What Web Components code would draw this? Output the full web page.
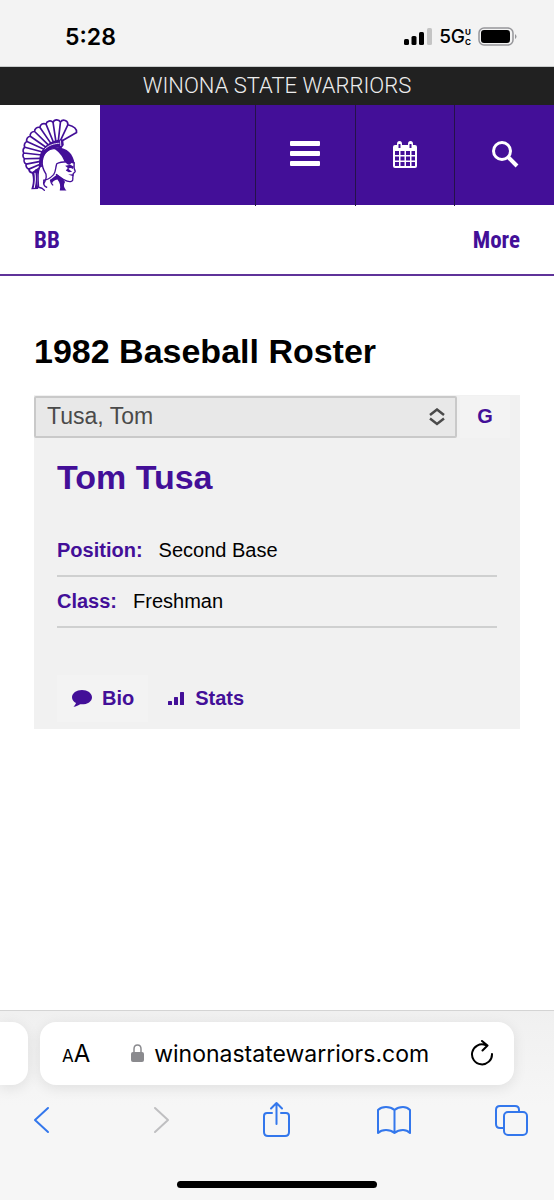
<!DOCTYPE html>
<html lang="en">
<head>
<meta charset="utf-8">
<meta name="viewport" content="width=device-width, initial-scale=1">
<title>1982 Baseball Roster - Winona State Warriors</title>
<style>
   html {
      --purple: #430f98;
      --grey: #f1f1f1;
      --blue: #3377ec;
   }
   body {
      margin: 0;
      min-height: 100vh;
      display: flex;
      flex-direction: column;
      background-color: #ffffff;
      color: #000000;
      font-family: "Liberation Sans", Arial, sans-serif;
   }
   roster-page {
      flex: 1;
   }
</style>
</head>
<body>
<status-bar time="5:28"></status-bar>
<site-header>Winona State Warriors</site-header>
<sport-nav>
   <span slot="sport">BB</span>
   <span slot="more">More</span>
</sport-nav>
<roster-page>
   <h1 slot="title">1982 Baseball Roster</h1>
   <player-card name="Tom Tusa" option="Tusa, Tom">
      <player-field label="Position:">Second Base</player-field>
      <player-field label="Class:">Freshman</player-field>
   </player-card>
</roster-page>
<browser-bar url="winonastatewarriors.com"></browser-bar>

<script>
class StatusBar extends HTMLElement {
   constructor() {
      super();
      this.attachShadow({ mode: 'open' })
      this.shadowRoot.innerHTML = `
         <style>
            :host {
               display: flex;
               justify-content: space-between;
               align-items: center;
               box-sizing: border-box;
               height: 67px;
               padding: 8px 37px 0 65px;
               background-color: #f3f3f3;
               border-bottom: 1px solid #c9cccc;
               font-family: Inter, sans-serif;
            }
            time {
               font-size: 23px;
               font-weight: 600;
            }
            .status {
               display: flex;
               align-items: center;
               gap: 7px;
            }
            .network {
               display: flex;
               align-items: center;
               font-size: 19px;
               font-weight: 500;
               line-height: 20px;
            }
            .network small {
               display: flex;
               flex-direction: column;
               font-size: 8px;
               font-weight: 700;
               line-height: 10px;
            }
            svg {
               display: block;
            }
         </style>
         <time></time>
         <div class="status">
            <svg width="28" height="18" viewBox="0 0 28 18" aria-label="Signal">
               <rect x="0" y="11" width="5" height="6" rx="1.5"/>
               <rect x="7.5" y="8" width="5" height="9" rx="1.5"/>
               <rect x="15" y="4" width="5" height="13" rx="1.5"/>
               <rect x="23" y="0" width="5" height="17" rx="1.5" fill="#c4c4c4"/>
            </svg>
            <div class="network"><span>5G</span><small><span>U</span><span>C</span></small></div>
            <svg width="39" height="20" viewBox="0 0 39 20" aria-label="Battery">
               <rect x="1" y="1" width="34" height="17" rx="5" fill="none" stroke="#96969a" stroke-width="1.5"/>
               <rect x="3" y="3" width="29" height="13" rx="3"/>
               <path d="M37 7q1.5 1 1.5 2.5t-1.5 2.5z" fill="#96969a"/>
            </svg>
         </div>
         `;
   }
   connectedCallback() {
      this.shadowRoot.querySelector('time').textContent = this.getAttribute('time')
   }
}
customElements.define('status-bar', StatusBar)

class WarriorLogo extends HTMLElement {
   constructor() {
      super();
      this.attachShadow({ mode: 'open' })
      this.shadowRoot.innerHTML = `
         <style>
            :host {
               display: block;
            }
            svg {
               display: block;
               width: 100%;
               height: 100%;
            }
         </style>
         <svg viewBox="0 15 297 300" fill="none" stroke="#430f98" stroke-width="5" stroke-linejoin="round" stroke-linecap="round" role="img" aria-label="Winona State Warriors">
            <path class="crest"/>
            <path fill="#430f98" stroke="none" d="M188 118C160 116 134 132 121 158C116 170 117 186 115 204L125 199C124 176 129 162 144 151C157 142 172 141 183 144L190 134Z"/>
            <path stroke="#ffffff" stroke-width="2.5" d="M134 146C146 134 160 130 176 129M180 122L181 136"/>
            <path fill="#430f98" stroke="none" d="M158 143C192 136 219 157 222 190L212 188C209 194 204 195 199 190L191 182C186 168 176 154 158 143Z"/>
            <path stroke-width="4" d="M163 145C145 143 129 158 126 181C124 197 130 210 137 221C139 232 135 242 130 249M199 184C186 184 176 186 169 190C165 202 166 215 160 222C151 231 146 237 131 239"/>
            <path stroke-width="4" d="M221 187C220 198 219 204 224 212C224 216 219 217 218 220C218 226 216 231 217 235C218 243 209 245 200 242C190 239 180 231 168 222"/>
            <path fill="#430f98" stroke="none" d="M194 196L210 193L220 199L217 206C212 202 207 202 204 205C206 209 211 210 215 214L205 215L196 210L202 203ZM203 222L219 221L218 227ZM148 239L170 222L187 235L194 244C188 253 190 260 198 270L178 270C181 257 179 246 171 237C163 238 158 242 155 248Z"/>
            <path stroke-width="4" d="M117 204C112 213 113 238 115 260L125 263L132 269M131 239C128 251 130 257 139 260M151 239C151 246 154 250 157 253"/>
            <path fill="#430f98" stroke="none" d="M94 215L102 212L107 206L115 206C110 225 111 247 114 265L93 266C98 251 101 235 94 215Z"/>
            <path stroke="#ffffff" stroke-width="3" d="M104 218C107 234 105 248 102 261"/>
         </svg>
         `;
   }
   connectedCallback() {
      // plume tips from front to back, each with its root on the helmet
      const tips = [[228, 97], [202, 74], [180, 66], [158, 67], [137, 72], [119, 82], [103, 94], [90, 108], [80, 124], [74, 141], [71, 158], [73, 175], [78, 191], [86, 206], [97, 217]]
      const roots = [[188, 120], [181, 119], [174, 119], [166, 120], [158, 123], [150, 127], [143, 133], [136, 140], [131, 147], [127, 155], [124, 164], [122, 174], [120, 183], [118, 192], [116, 203]]
      let d = `M${tips[0]}`
      tips.slice(1).forEach((tip, i) => {
         d += i === 0 ? `C230 84 214 77 ${tip}` : `A12 12 0 0 0 ${tip}`
      })
      tips.forEach((tip, i) => {
         d += `M${tip}L${roots[i]}`
      })
      this.shadowRoot.querySelector('.crest').setAttribute('d', d)
   }
}
customElements.define('warrior-logo', WarriorLogo)

class SiteHeader extends HTMLElement {
   constructor() {
      super();
      this.attachShadow({ mode: 'open' })
      this.shadowRoot.innerHTML = `
         <style>
            :host {
               display: block;
            }
            .school {
               background-color: #212121;
               color: #ededed;
               font-family: Roboto, sans-serif;
               font-size: 22px;
               font-weight: 300;
               line-height: 38px;
               text-align: center;
               text-transform: uppercase;
            }
            nav {
               display: grid;
               grid-template-columns: 18% 1fr 18% 18% 18%;
               height: 100px;
               background-color: var(--purple);
            }
            .home {
               background-color: #ffffff;
            }
            warrior-logo {
               height: 100%;
            }
            button {
               display: flex;
               justify-content: center;
               align-items: center;
               padding: 0 0 2px;
               border: 0;
               border-left: 1px solid #24124a;
               background: none;
               color: #ffffff;
            }
         </style>
         <div class="school"><slot></slot></div>
         <nav>
            <a class="home" href="#"><warrior-logo></warrior-logo></a>
            <span></span>
            <button aria-label="Menu">
               <svg width="30" height="26" viewBox="0 0 30 26" fill="currentColor">
                  <rect y="0" width="30" height="5" rx="1"/>
                  <rect y="10" width="30" height="5" rx="1"/>
                  <rect y="20" width="30" height="5" rx="1"/>
               </svg>
            </button>
            <button aria-label="Calendar">
               <svg width="24" height="27" viewBox="0 0 24 27">
                  <path fill="currentColor" fill-rule="evenodd" d="M2 4H4V3Q4 0 6.5 0T9 3V4H15V3Q15 0 17.5 0T20 3V4H22Q24 4 24 6V25Q24 27 22 27H2Q0 27 0 25V6Q0 4 2 4ZM5.500 3V7H7.500V3ZM16.500 3V7H18.500V3ZM2 10H6V14H2ZM7.500 10H11.500V14H7.500ZM13 10H17V14H13ZM18.500 10H22V14H18.500ZM2 15.500H6V19.500H2ZM7.500 15.500H11.500V19.500H7.500ZM13 15.500H17V19.500H13ZM18.500 15.500H22V19.500H18.500ZM2 21H6V25H2ZM7.500 21H11.500V25H7.500ZM13 21H17V25H13ZM18.500 21H22V25H18.500Z"/>
               </svg>
            </button>
            <button aria-label="Search">
               <svg width="28" height="28" viewBox="0 0 28 28" fill="none" stroke="currentColor">
                  <circle cx="11" cy="11" r="8.5" stroke-width="3"/>
                  <path d="M17 17L26 26" stroke-width="4"/>
               </svg>
            </button>
         </nav>
         `;
   }
}
customElements.define('site-header', SiteHeader)

class SportNav extends HTMLElement {
   constructor() {
      super();
      this.attachShadow({ mode: 'open' })
      this.shadowRoot.innerHTML = `
         <style>
            :host {
               display: flex;
               justify-content: space-between;
               align-items: center;
               box-sizing: border-box;
               height: 71px;
               padding: 2px 34px 0;
               border-bottom: 2px solid #5f3299;
               font-family: "Roboto Condensed", "Liberation Sans Narrow", Roboto, sans-serif;
            }
            a, button {
               padding: 0;
               border: 0;
               background: none;
               color: var(--purple);
               font: inherit;
               font-size: 23px;
               font-weight: 700;
               text-decoration: none;
            }
         </style>
         <a href="#"><slot name="sport"></slot></a>
         <button><slot name="more"></slot></button>
         `;
   }
}
customElements.define('sport-nav', SportNav)

class RosterPage extends HTMLElement {
   constructor() {
      super();
      this.attachShadow({ mode: 'open' })
      this.shadowRoot.innerHTML = `
         <style>
            :host {
               display: block;
               padding: 55px 34px 0;
            }
            ::slotted(h1) {
               margin: 0 0 24px;
               font-size: 34px;
               line-height: 40px;
            }
         </style>
         <main>
            <slot name="title"></slot>
            <slot></slot>
         </main>
         `;
   }
}
customElements.define('roster-page', RosterPage)

class PlayerField extends HTMLElement {
   constructor() {
      super();
      this.attachShadow({ mode: 'open' })
      this.shadowRoot.innerHTML = `
         <style>
            :host {
               display: flex;
               gap: 16px;
               border-bottom: 2px solid #cfd0d0;
               font-size: 20px;
               line-height: 49px;
            }
            b {
               color: var(--purple);
            }
         </style>
         <b></b>
         <span><slot></slot></span>
         `;
   }
   connectedCallback() {
      this.shadowRoot.querySelector('b').textContent = this.getAttribute('label')
   }
}
customElements.define('player-field', PlayerField)

class PlayerCard extends HTMLElement {
   constructor() {
      super();
      this.attachShadow({ mode: 'open' })
      this.shadowRoot.innerHTML = `
         <style>
            :host {
               display: block;
               background-color: var(--grey);
            }
            .picker {
               display: flex;
               align-items: center;
               gap: 3px;
               padding: 1px 10px 0 0;
            }
            /* the arrows share the grid cell of the select */
            .choice {
               flex: 1;
               display: grid;
               align-items: center;
            }
            .choice > * {
               grid-area: 1 / 1;
            }
            .choice svg {
               justify-self: end;
               margin-right: 12px;
               pointer-events: none;
            }
            select {
               appearance: none;
               height: 42px;
               padding: 0 11px 2px;
               border: 2px solid #c9c9c9;
               border-radius: 2px;
               background-color: #e8e8e8;
               color: #4a4a4a;
               font: inherit;
               font-size: 23px;
            }
            button, .tabs a {
               box-sizing: border-box;
               border: 0;
               background-color: #f3f3f3;
               color: var(--purple);
               font: inherit;
               font-size: 20px;
               font-weight: 700;
            }
            button {
               width: 50px;
               height: 42px;
               padding: 0 0 2px;
            }
            .body {
               padding: 18px 23px 7px;
            }
            h2 {
               margin: 0 0 28px;
               color: var(--purple);
               font-size: 34px;
               line-height: 42px;
            }
            .tabs {
               display: flex;
               gap: 6px;
               margin-top: 47px;
            }
            .tabs a {
               display: flex;
               align-items: center;
               gap: 10px;
               height: 47px;
               padding: 0 14px;
               text-decoration: none;
            }
            .tabs a + a {
               background: none;
            }
         </style>
         <div class="picker">
            <div class="choice">
               <select aria-label="Player"><option></option></select>
               <svg width="16" height="18" viewBox="0 0 16 18" fill="none" stroke="#4a4a4a" stroke-width="2.5">
                  <path d="M1 7L8 1.5L15 7M1 10.500L8 16L15 10.500"/>
               </svg>
            </div>
            <button>G</button>
         </div>
         <div class="body">
            <h2></h2>
            <slot></slot>
            <div class="tabs">
               <a href="#bio">
                  <svg width="21" height="17" viewBox="0 0 21 17" fill="currentColor">
                     <path d="M11 0C5.500 0 1 3.200 1 7.200C1 9.600 2.500 11.700 5 13C4.600 14.500 3.600 15.700 2.400 16.700C5.400 16.600 7.500 15.500 9.200 14.300C15.700 14.900 21 11.800 21 7.200C21 3.200 16.500 0 11 0Z"/>
                  </svg>
                  Bio
               </a>
               <a href="#stats">
                  <svg width="17" height="14" viewBox="0 0 17 14" fill="currentColor">
                     <rect x="0" y="9" width="4" height="4" rx="0.5"/>
                     <rect x="6" y="5" width="4" height="8" rx="0.5"/>
                     <rect x="12" y="0" width="4" height="13" rx="0.5"/>
                  </svg>
                  Stats
               </a>
            </div>
         </div>
         `;
   }
   connectedCallback() {
      this.shadowRoot.querySelector('h2').textContent = this.getAttribute('name')
      this.shadowRoot.querySelector('option').textContent = this.getAttribute('option')
   }
}
customElements.define('player-card', PlayerCard)

class BrowserBar extends HTMLElement {
   constructor() {
      super();
      this.attachShadow({ mode: 'open' })
      this.shadowRoot.innerHTML = `
         <style>
            :host {
               display: block;
               border-top: 1px solid #d4d4d4;
               padding: 11px 0 12px;
               background: linear-gradient(#f0f0f0, #f6f6f6 50%);
               font-family: Inter, sans-serif;
            }
            button {
               display: flex;
               justify-content: center;
               align-items: center;
               padding: 0;
               border: 0;
               background: none;
               color: inherit;
               font: inherit;
            }
            .tabs {
               display: flex;
               gap: 12px;
               padding-right: 40px;
            }
            .previous, .address {
               height: 63px;
               background-color: #ffffff;
               box-shadow: 0 3px 14px rgba(0, 0, 0, 0.09);
            }
            .previous {
               width: 28px;
               border-radius: 0 16px 16px 0;
            }
            .address {
               flex: 1;
               display: flex;
               justify-content: space-between;
               align-items: center;
               box-sizing: border-box;
               padding: 0 20px 0 22px;
               border-radius: 16px;
            }
            .size {
               align-items: baseline;
               font-size: 24px;
            }
            .size small {
               font-size: 17px;
            }
            .url {
               gap: 10px;
               font-size: 23px;
            }
            .tools {
               display: flex;
               justify-content: space-between;
               padding: 16px 25px 0 23px;
               color: var(--blue);
            }
            .tools svg {
               display: block;
            }
            .indicator {
               width: 36%;
               height: 7px;
               margin: 42px auto 0;
               border-radius: 4px;
               background-color: #000000;
            }
         </style>
         <div class="tabs">
            <div class="previous"></div>
            <div class="address">
               <button class="size" aria-label="Page settings"><small>A</small>A</button>
               <button class="url">
                  <svg width="13" height="19" viewBox="0 0 13 19">
                     <path d="M3 9V5Q3 1 6.5 1T10 5V9" fill="none" stroke="#8a8a8e" stroke-width="1.5"/>
                     <rect y="8" width="13" height="10" rx="2" fill="#8a8a8e"/>
                  </svg>
                  <span></span>
               </button>
               <button aria-label="Reload">
                  <svg width="24" height="28" viewBox="0 0 24 28" fill="none" stroke="currentColor" stroke-width="2" stroke-linecap="round" stroke-linejoin="round">
                     <path d="M22 14A10 10 0 1 1 15.500 5M12 1L17.500 5.500L12.500 10.500"/>
                  </svg>
               </button>
            </div>
         </div>
         <div class="tools">
            <button aria-label="Back">
               <svg width="36" height="38" viewBox="0 0 36 38" fill="none" stroke="currentColor" stroke-width="2" stroke-linecap="round" stroke-linejoin="round"><path d="M25 7L12 19L25 31"/></svg>
            </button>
            <button aria-label="Forward">
               <svg width="36" height="38" viewBox="0 0 36 38" fill="none" stroke="#bfbfc1" stroke-width="2" stroke-linecap="round" stroke-linejoin="round"><path d="M14 7L27 19L14 31"/></svg>
            </button>
            <button aria-label="Share">
               <svg width="36" height="38" viewBox="0 0 36 38" fill="none" stroke="currentColor" stroke-width="2" stroke-linecap="round" stroke-linejoin="round"><path d="M14 12H9Q6 12 6 15V31Q6 35 10 35H27Q31 35 31 31V15Q31 12 28 12H23M18.500 23V2M13 7.500L18.500 2L24 7.500"/></svg>
            </button>
            <button aria-label="Bookmarks">
               <svg width="36" height="38" viewBox="0 0 36 38" fill="none" stroke="currentColor" stroke-width="2" stroke-linecap="round" stroke-linejoin="round"><path d="M18.500 9Q15 6 10 6Q5 6 2 9V32Q5 29 10 29Q15 29 18.500 32Q22 29 27 29Q31 29 34 32V9Q31 6 27 6Q22 6 18.500 9V32"/></svg>
            </button>
            <button aria-label="Tabs">
               <svg width="36" height="38" viewBox="0 0 36 38" fill="none" stroke="currentColor" stroke-width="2" stroke-linejoin="round"><rect x="11" y="11" width="23" height="23" rx="4"/><path d="M11 27H7Q3 27 3 23V9Q3 5 7 5H22Q26 5 26 9V11"/></svg>
            </button>
         </div>
         <div class="indicator"></div>
         `;
   }
   connectedCallback() {
      this.shadowRoot.querySelector('.url span').textContent = this.getAttribute('url')
   }
}
customElements.define('browser-bar', BrowserBar)
</script>
</body>
</html>
